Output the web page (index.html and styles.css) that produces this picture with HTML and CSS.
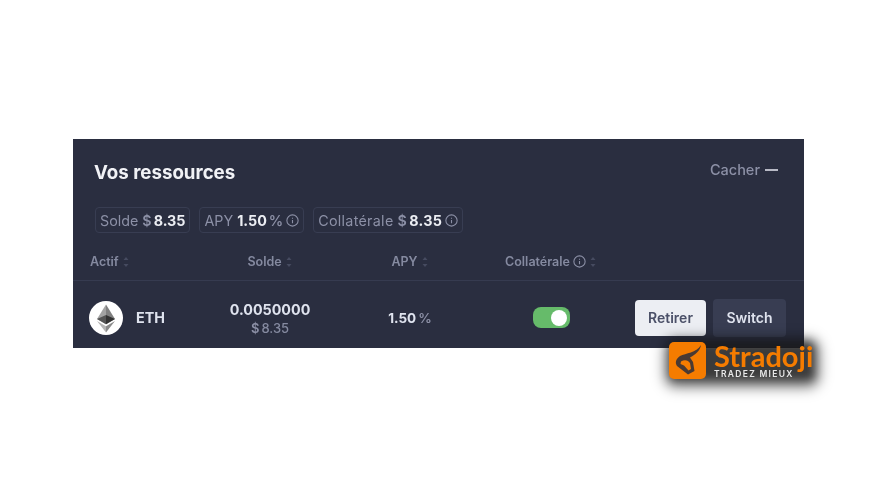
FILE: index.html
```html
<!DOCTYPE html>
<html lang="fr">
  <head>
    <meta charset="utf-8">
    <title>Vos ressources</title>
    <link rel="stylesheet" href="styles.css">
  </head>
  <body>
    <div class="card">
      <div class="top">
        <h2>Vos ressources</h2>
        <div class="hide">Cacher <span class="dash"></span></div>
      </div>
      <div class="pills">
        <div class="pill">Solde <span class="unit">$</span><b>8.35</b></div>
        <div class="pill">APY <b>1.50</b><span class="unit">%</span>
          <svg class="info" viewBox="0 0 12 12"><circle cx="6" cy="6" r="5.2"/><path d="M6 5.500v3M6 3.400v.9"/></svg>
        </div>
        <div class="pill wide">Collatérale <span class="unit">$</span><b>8.35</b>
          <svg class="info" viewBox="0 0 12 12"><circle cx="6" cy="6" r="5.2"/><path d="M6 5.500v3M6 3.400v.9"/></svg>
        </div>
      </div>
      <div class="table-head">
        <div class="th left">Actif
          <svg class="sort" viewBox="0 0 8 12"><path d="M4 1 6.500 4h-5zM4 11 1.500 8h5z"/></svg>
        </div>
        <div class="th">Solde
          <svg class="sort" viewBox="0 0 8 12"><path d="M4 1 6.500 4h-5zM4 11 1.500 8h5z"/></svg>
        </div>
        <div class="th">APY
          <svg class="sort" viewBox="0 0 8 12"><path d="M4 1 6.500 4h-5zM4 11 1.500 8h5z"/></svg>
        </div>
        <div class="th">Collatérale
          <svg class="info" viewBox="0 0 12 12"><circle cx="6" cy="6" r="5.2"/><path d="M6 5.500v3M6 3.400v.9"/></svg>
          <svg class="sort" viewBox="0 0 8 12"><path d="M4 1 6.500 4h-5zM4 11 1.500 8h5z"/></svg>
        </div>
        <div></div>
      </div>
      <div class="table-row">
        <div class="asset">
          <svg class="eth" viewBox="0 0 34 34">
            <circle cx="17" cy="17" r="17" fill="#fff"/>
            <path d="M17 3.500 8 18l9 5.200z" fill="#a3a3a3"/>
            <path d="M17 3.500 26 18l-9 5.200z" fill="#808080"/>
            <path d="M17 14 8 18l9 5.200z" fill="#555"/>
            <path d="M17 14l9 4-9 5.200z" fill="#333"/>
            <path d="M8 20l9 11.500V25.300z" fill="#b4b4b4"/>
            <path d="M26 20l-9 11.500V25.300z" fill="#8a8a8a"/>
          </svg>
          <span>ETH</span>
        </div>
        <div class="amount">
          <div class="qty">0.0050000</div>
          <div class="usd"><span class="unit">$</span>8.35</div>
        </div>
        <div class="apy"><b>1.50</b><span class="unit">%</span></div>
        <div class="toggle-cell"><span class="toggle"></span></div>
        <div class="actions">
          <button class="btn light">Retirer</button>
          <button class="btn dark">Switch</button>
        </div>
      </div>
    </div>

    <div class="logo">
      <svg class="logo-mark" viewBox="0 0 37 37">
        <rect width="37" height="37" rx="5" fill="#f57c00"/>
        <path d="M32 3C31 9 26 13 21 15.500L24 20 25.500 29 19 32.500 8 24C6 21 6.500 17 11 14 17 11 27 11 32 3z" fill="#4a3a33"/>
        <path d="M12 19.500C14.500 18 17 18 19 19L21 21 22 27 19.500 28.500 15 23.500 11.500 22z" fill="#f57c00"/>
      </svg>
      <div class="logo-text">
        <div class="logo-name">Stradoji</div>
        <div class="logo-tag">TRADEZ MIEUX</div>
      </div>
    </div>
  </body>
</html>
```

FILE: styles.css
```css
*{
    margin: 0;
    padding: 0;
    box-sizing: border-box;
    font-family: "Inter", sans-serif;
}
body{
    background: #fff;
    height: 487px;
    overflow: hidden;
    padding: 139px 0 0 73px;
}
.card{
    width: 731px;
    height: 209px;
    background: #2a2e40;
    color: #8c90a6;
    filter: blur(0.5px);
}
.top{
    display: flex;
    justify-content: space-between;
    padding: 22px 26px 0 21px;
    height: 68px;
}
.top h2{
    font-size: 18.700px;
    line-height: 23px;
    font-weight: 700;
    color: #f1f2f6;
}
.hide{
    display: flex;
    align-items: center;
    gap: 5px;
    height: 17px;
    font-size: 14.500px;
    font-weight: 500;
}
.dash{
    width: 13px;
    height: 2px;
    background: #b8bac6;
}
.pills{
    display: flex;
    gap: 9px;
    padding-left: 22px;
    height: 26px;
}
.pill{
    display: flex;
    align-items: center;
    gap: 4px;
    height: 26px;
    padding: 0 4px;
    border: 1px solid #383d52;
    border-radius: 4px;
    font-size: 14.300px;
}
.pill.wide{
    letter-spacing: 0.300px;
}
.pill b{
    color: #eceef3;
    font-weight: 700;
}
.pill .unit + b{
    margin-left: -2px;
}
.pill b + .unit{
    margin-left: -2px;
}
.pill .info{
    margin-left: -1px;
}
.unit{
    color: #8c90a6;
    font-weight: 600;
}
.info{
    width: 13px;
    height: 13px;
    fill: none;
    stroke: #8c90a6;
    stroke-width: 1;
}
.sort{
    width: 8px;
    height: 12px;
    fill: #464b60;
}
.table-head,.table-row{
    display: grid;
    grid-template-columns: 110px 140px 140px 142px 1fr;
    padding: 0 18px 0 17px;
    align-items: center;
}
.table-head{
    height: 48px;
    padding-top: 10px;
    border-bottom: 1px solid #363b50;
}
.th{
    display: flex;
    align-items: center;
    justify-content: center;
    gap: 3px;
    font-size: 12.500px;
    font-weight: 600;
    color: #858aa0;
}
.th.left{
    justify-content: flex-start;
}
.table-row{
    height: 67px;
    padding-top: 6px;
    text-align: center;
}
.asset{
    display: flex;
    align-items: center;
    gap: 13px;
    margin-left: -1px;
    font-size: 14.300px;
    font-weight: 700;
    color: #dfe3ee;
}
.eth{
    width: 34px;
    height: 34px;
}
.qty{
    font-size: 14.300px;
    line-height: 20px;
    font-weight: 700;
    color: #dfe3ee;
}
.usd{
    font-size: 13px;
    line-height: 16px;
    font-weight: 500;
    color: #858aa0;
}
.usd .unit{
    margin-right: 2px;
}
.apy{
    display: flex;
    justify-content: center;
    gap: 2px;
    font-size: 13.500px;
}
.apy b{
    color: #dfe3ee;
    font-weight: 700;
}
.toggle-cell{
    display: flex;
    justify-content: center;
}
.toggle{
    display: flex;
    justify-content: flex-end;
    align-items: center;
    width: 37px;
    height: 21px;
    padding: 0 3px;
    border-radius: 8px;
    background: #66bb6a;
}
.toggle::after{
    content: "";
    width: 16px;
    height: 16px;
    border-radius: 50%;
    background: #fff;
}
.actions{
    display: flex;
    justify-content: flex-end;
    align-items: center;
    gap: 7px;
}
.btn{
    border: 0;
    border-radius: 4px;
    font-size: 14px;
    font-weight: 600;
}
.btn.light{
    width: 71px;
    height: 36px;
    background: #eceef3;
    color: #4b5068;
}
.btn.dark{
    width: 73px;
    height: 38px;
    background: #383d52;
    color: #dfe3ee;
}
.logo{
    position: absolute;
    left: 669px;
    top: 342px;
    display: flex;
    gap: 8px;
    filter: blur(0.4px);
}
.logo::before{
    content: "";
    position: absolute;
    left: 0;
    top: -1px;
    width: 146px;
    height: 40px;
    border-radius: 6px;
    background: rgba(25,25,25,.85);
    box-shadow: 0 2px 10px 4px rgba(0,0,0,.55);
    filter: blur(5px);
}
.logo-mark{
    position: relative;
    width: 37px;
    height: 37px;
}
.logo-text{
    position: relative;
}
.logo-name{
    font-family: "Lato", sans-serif;
    font-size: 29px;
    line-height: 27px;
    font-weight: 700;
    color: #f57c00;
}
.logo-tag{
    font-size: 8.500px;
    line-height: 10px;
    font-weight: 600;
    letter-spacing: 1.300px;
    color: #e8e8e8;
}
```
